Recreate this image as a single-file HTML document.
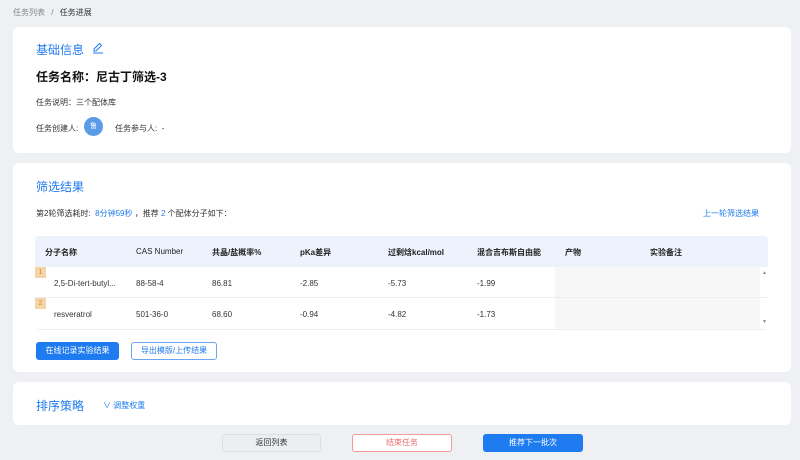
<!DOCTYPE html><html><head><meta charset="utf-8"><style>
*{margin:0;padding:0;box-sizing:border-box}
body{width:800px;height:460px;background:#eef0f4;font-family:"Liberation Sans","Noto Sans CJK SC",sans-serif;position:relative;overflow:hidden;color:#222}
.a{position:absolute;white-space:nowrap}
.card{position:absolute;left:13px;width:778px;background:#fff;border-radius:6px}
.blue{color:#1f7bf0}
.t{font-size:8px;color:#333}
.h{font-size:8px;color:#222;font-weight:bold}
.btn{position:absolute;height:18px;border-radius:3px;font-size:8px;text-align:center;line-height:16px}
</style></head><body>
<div class="a" style="left:13px;top:7px;font-size:8px;color:#888">任务列表 <span style="margin:0 4px">/</span> <span style="color:#333">任务进展</span></div>

<div class="card" style="top:27px;height:126px"></div>
<div class="a blue" style="left:36px;top:41px;font-size:12px">基础信息</div>
<svg class="a" style="left:92px;top:42px" width="12" height="12" viewBox="0 0 12 12"><path d="M2 9 L2 7 L7.5 1.5 L9.5 3.5 L4 9 Z M1 11 H11" fill="none" stroke="#1f7bf0" stroke-width="1"/></svg>
<div class="a" style="left:36px;top:68px;font-size:12px;font-weight:bold;color:#111">任务名称：尼古丁筛选-3</div>
<div class="a t" style="left:36px;top:97px">任务说明：三个配体库</div>
<div class="a t" style="left:36px;top:123px">任务创建人:</div>
<div class="a" style="left:84px;top:117px;width:19px;height:19px;border-radius:50%;background:#5a9be8;color:#fff;font-size:7px;text-align:center;line-height:19px">鲁</div>
<div class="a t" style="left:115px;top:123px">任务参与人: &nbsp;-</div>

<div class="card" style="top:163px;height:209px"></div>
<div class="a blue" style="left:36px;top:178px;font-size:12px">筛选结果</div>
<div class="a t" style="left:36px;top:208px">第2轮筛选耗时: &nbsp;<span class="blue">8分钟59秒</span> ，推荐 <span class="blue">2</span> 个配体分子如下：</div>
<div class="a blue" style="left:703px;top:208px;font-size:8px">上一轮筛选结果</div>

<div class="a" style="left:35px;top:236px;width:733px;height:94px;border-radius:4px;overflow:hidden">
<div class="a" style="left:0;top:0;width:733px;height:31px;background:#edf2fd"></div>
<div class="a" style="left:520px;top:31px;width:205px;height:62px;background:#f7f7f7"></div>
<div class="a" style="left:0;top:61px;width:733px;height:1px;background:#eee"></div>
<div class="a" style="left:0;top:93px;width:733px;height:1px;background:#eee"></div>
<div class="a" style="left:0;top:31px;width:11px;height:11px;background:#f5d5a8;color:#c88a3a;font-size:7px;text-align:center;line-height:11px">1</div>
<div class="a" style="left:0;top:62px;width:11px;height:11px;background:#f5d5a8;color:#c88a3a;font-size:7px;text-align:center;line-height:11px">2</div>
<div class="a" style="left:727px;top:34px;font-size:5px;color:#888">▲</div>
<div class="a" style="left:727px;top:83px;font-size:5px;color:#888">▼</div>
</div>
<div class="a h" style="left:45px;top:247px">分子名称</div>
<div class="a h" style="left:136px;top:247px;font-weight:normal">CAS Number</div>
<div class="a h" style="left:212px;top:247px">共晶/盐概率%</div>
<div class="a h" style="left:300px;top:247px">pKa差异</div>
<div class="a h" style="left:388px;top:247px">过剩焓kcal/mol</div>
<div class="a h" style="left:477px;top:247px">混合吉布斯自由能</div>
<div class="a h" style="left:565px;top:247px">产物</div>
<div class="a h" style="left:650px;top:247px">实验备注</div>
<div class="a t" style="left:54px;top:279px">2,5-Di-tert-butyl...</div>
<div class="a t" style="left:136px;top:279px">88-58-4</div>
<div class="a t" style="left:212px;top:279px">86.81</div>
<div class="a t" style="left:300px;top:279px">-2.85</div>
<div class="a t" style="left:388px;top:279px">-5.73</div>
<div class="a t" style="left:477px;top:279px">-1.99</div>
<div class="a t" style="left:54px;top:310px">resveratrol</div>
<div class="a t" style="left:136px;top:310px">501-36-0</div>
<div class="a t" style="left:212px;top:310px">68.60</div>
<div class="a t" style="left:300px;top:310px">-0.94</div>
<div class="a t" style="left:388px;top:310px">-4.82</div>
<div class="a t" style="left:477px;top:310px">-1.73</div>

<div class="btn" style="left:36px;top:342px;width:83px;background:#1f7bf0;color:#fff;border:1px solid #1f7bf0">在线记录实验结果</div>
<div class="btn" style="left:131px;top:342px;width:86px;background:#fff;color:#1f7bf0;border:1px solid #6aa5f2">导出模版/上传结果</div>

<div class="card" style="top:382px;height:43px"></div>
<div class="a blue" style="left:36px;top:397px;font-size:12px">排序策略</div>
<div class="a blue" style="left:103px;top:400px;font-size:8px">∨ 调整权重</div>

<div class="btn" style="left:222px;top:434px;width:99px;background:#eceef1;color:#333;border:1px solid #dcdfe4">返回列表</div>
<div class="btn" style="left:352px;top:434px;width:100px;background:#fff;color:#f26b6b;border:1px solid #f29a9a">结束任务</div>
<div class="btn" style="left:483px;top:434px;width:100px;background:#1f7bf0;color:#fff;border:1px solid #1f7bf0">推荐下一批次</div>
</body></html>
